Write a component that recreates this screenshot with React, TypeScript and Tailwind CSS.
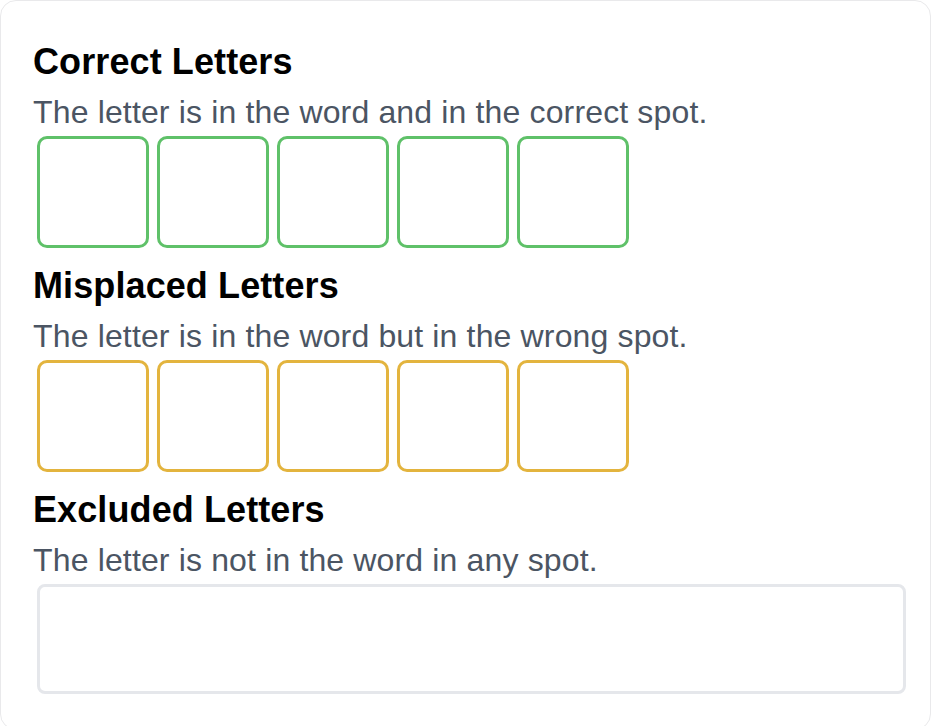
import React from "react";

const sections = [
  {
    title: "Correct Letters",
    hint: "The letter is in the word and in the correct spot.",
    border: "border-[#5fc169]",
  },
  {
    title: "Misplaced Letters",
    hint: "The letter is in the word but in the wrong spot.",
    border: "border-[#e3b43e]",
  },
];

function LetterRow({ border }: { border: string }) {
  return (
    <div className="flex gap-2 pl-1">
      {[0, 1, 2, 3, 4].map((i) => (
        <input
          key={i}
          maxLength={1}
          className={`h-[112px] w-[112px] rounded-[10px] border-[3.5px] bg-white text-center text-[48px] font-bold uppercase outline-none ${border}`}
        />
      ))}
    </div>
  );
}

export default function App() {
  return (
    <div
      className="min-h-screen bg-white"
      style={{ fontFamily: '"Liberation Sans", Arial, sans-serif' }}
    >
      <div className="h-[730px] w-[931px] rounded-2xl border border-[#e9e9eb] bg-white pl-[32px] pr-[21px] pt-[35px]">
        {sections.map((s) => (
          <section key={s.title} className="mb-3">
            <h2 className="text-[36px] font-bold leading-[52px] tracking-[0.1px] text-black">{s.title}</h2>
            <p className="text-[32px] leading-[48px] tracking-[0.15px] text-[#4b5563]">{s.hint}</p>
            <LetterRow border={s.border} />
          </section>
        ))}

        <section>
          <h2 className="text-[36px] font-bold leading-[52px] tracking-[0.1px] text-black">Excluded Letters</h2>
          <p className="text-[32px] leading-[48px] tracking-[0.15px] text-[#4b5563]">
            The letter is not in the word in any spot.
          </p>
          <div className="pl-1">
            <input className="h-[110px] w-[869px] rounded-[8px] border-[3px] border-[#e5e7eb] bg-white px-4 text-[32px] uppercase outline-none" />
          </div>
        </section>
      </div>
    </div>
  );
}
